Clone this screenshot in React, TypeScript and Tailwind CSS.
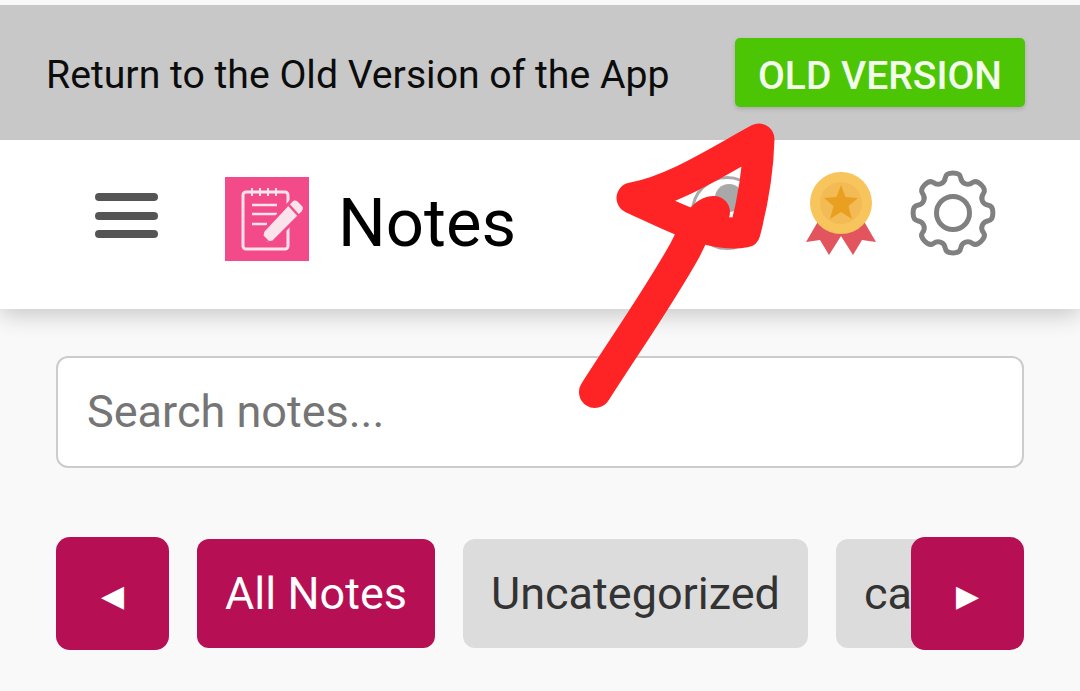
const gearPath = () => {
    const pts: [number, number][] = [];
    for (let i = 0; i < 8; i++) {
        const a = -90 + i * 45;
        const teeth: [number, number][] = [
            [32, a - 15],
            [40.5, a - 10],
            [40.5, a + 10],
            [32, a + 15],
        ];
        teeth.forEach(([r, d]) => {
            const t = (d * Math.PI) / 180;
            pts.push([r * Math.cos(t), r * Math.sin(t)]);
        });
    }
    const mid = (p: [number, number], q: [number, number]) => [(p[0] + q[0]) / 2, (p[1] + q[1]) / 2];
    const start = mid(pts[pts.length - 1], pts[0]);
    let d = `M${start[0].toFixed(2)} ${start[1].toFixed(2)}`;
    pts.forEach((p, i) => {
        const m = mid(p, pts[(i + 1) % pts.length]);
        d += ` Q${p[0].toFixed(2)} ${p[1].toFixed(2)} ${m[0].toFixed(2)} ${m[1].toFixed(2)}`;
    });
    return d + 'Z';
};

function NotesLogo() {
    return (
        <svg width="84" height="84" viewBox="0 0 84 84" className="shrink-0">
            <rect width="84" height="84" fill="#f34b8a" />
            <rect x="18" y="15" width="45" height="57" rx="3" fill="none" stroke="#fbe3ec" strokeWidth="3" />
            <path d="M27 11v8M35 11v8M43 11v8M51 11v8" stroke="#fbe3ec" strokeWidth="2" />
            <path d="M27 28h25M27 37h25M27 47h15" stroke="#fbe3ec" strokeWidth="2.5" />
            <path
                d="M35 67L38 54L66 24Q70 20 74 24L78 28Q81 31 78 35L48 65Z"
                fill="#fbe3ec"
                stroke="#f34b8a"
                strokeWidth="3"
                strokeLinejoin="round"
            />
            <path d="M36 66L38 58L44 64Z" fill="#f34b8a" />
            <path d="M63 27L74 39" stroke="#f34b8a" strokeWidth="2.5" />
        </svg>
    );
}

function Medal() {
    return (
        <svg width="72" height="84" viewBox="0 0 72 84" className="shrink-0">
            <path d="M14 46L0 70L14 68L23 83L35 64L47 83L56 68L70 70L56 46Z" fill="#e2555f" />
            <circle cx="35" cy="31" r="31" fill="#f8c45c" />
            <circle cx="35" cy="31" r="21" fill="#f3bb55" />
            <path d="M35 13L39.5 25L52 26L42.5 34L46 47L35 40L24 47L27.5 34L18 26L30.5 25Z" fill="#e9a020" />
        </svg>
    );
}

function Gear() {
    return (
        <svg width="88" height="88" viewBox="-44 -44 88 88" className="shrink-0 -ml-[1px] -mt-[3px]">
            <path d={gearPath()} fill="none" stroke="#808080" strokeWidth="5" />
            <circle r="16.5" fill="none" stroke="#808080" strokeWidth="5" />
        </svg>
    );
}

function ArrowButton({ glyph, extra }: { glyph: string; extra: string }) {
    return (
        <button
            className={`w-[113px] h-[113px] shrink-0 pt-[3px] rounded-[14px] bg-[#b60f53] text-white flex items-center justify-center text-[30px] font-['DejaVu_Sans',sans-serif] ${extra}`}
        >
            {glyph}
        </button>
    );
}

export default function App() {
    return (
        <div className="relative w-[1080px] h-[691px] overflow-hidden bg-[#f9f9f9] pt-[5px] font-['Roboto',sans-serif]">
            <div className="relative z-10 h-[135px] bg-[#c8c8c8] flex items-center justify-between pl-[46px] pr-[55px]">
                <span className="pt-[5px] text-[39.2px] text-[#0c0c0c] whitespace-nowrap">Return to the Old Version of the App</span>
                <button className="w-[290px] h-[69px] pt-[8px] rounded-[5px] bg-[#4cc604] text-[#f2fbec] text-[39px] font-medium shadow-[0_2px_4px_rgba(0,0,0,0.15)]">
                    OLD VERSION
                </button>
            </div>

            <header className="relative h-[169px] bg-white shadow-[0_6px_22px_rgba(0,0,0,0.2)] flex items-start">
                <div className="ml-[95px] mt-[53px] w-[63px] flex flex-col gap-[10.5px]">
                    <div className="h-[8px] rounded-full bg-[#555]" />
                    <div className="h-[8px] rounded-full bg-[#555]" />
                    <div className="h-[8px] rounded-full bg-[#555]" />
                </div>
                <div className="ml-[67px] mt-[37px]">
                    <NotesLogo />
                </div>
                <span className="ml-[29px] mt-[43px] text-[67px] leading-[80px] text-black">Notes</span>
                <div className="ml-auto mr-[83px] mt-[32px] flex items-start gap-[32px]">
                    <div className="relative w-[72px] h-[74px] mr-[11px] mt-[4px] rounded-full border-[3px] border-[#aaa]">
                        <div className="absolute left-[21px] top-[5px] w-[28px] h-[28px] rounded-full bg-[#a8a8a8]" />
                    </div>
                    <Medal />
                    <Gear />
                </div>
            </header>

            <main className="px-[56px] pt-[47px]">
                <div className="h-[112px] rounded-[12px] border-2 border-[#cccccc] bg-white flex items-center pl-[29px] text-[45px] text-[#757575]">
                    Search notes...
                </div>

                <div className="relative mt-[69px] flex items-center gap-[28px]">
                    <ArrowButton glyph="◀" extra="" />
                    <div className="flex items-center gap-[28px]">
                        <div className="h-[109px] px-[28px] rounded-[12px] bg-[#b60f53] text-white text-[45px] flex items-center whitespace-nowrap">
                            All Notes
                        </div>
                        <div className="h-[109px] px-[28px] rounded-[12px] bg-[#dcdcdc] text-[#333] text-[45px] flex items-center whitespace-nowrap">
                            Uncategorized
                        </div>
                        <div className="h-[109px] w-[120px] pl-[28px] rounded-[12px] bg-[#dcdcdc] text-[#333] text-[45px] flex items-center whitespace-nowrap">
                            ca
                        </div>
                    </div>
                    <ArrowButton glyph="▶" extra="absolute right-0 top-0" />
                </div>
            </main>

            {/* hand drawn red arrow on top of the screenshot */}
            <svg className="absolute left-0 top-0 z-20 pointer-events-none" width="1080" height="691" viewBox="0 0 1080 691">
                <path
                    d="M595 392C625 345 660 295 685 250C695 230 702 212 714 212"
                    fill="none"
                    stroke="#fe2324"
                    strokeWidth="32"
                    strokeLinecap="round"
                    strokeLinejoin="round"
                />
                <path
                    d="M632 198C675 190 720 160 759 139C758 175 752 205 745 232C710 238 670 215 632 198Z"
                    fill="none"
                    stroke="#fe2324"
                    strokeWidth="31"
                    strokeLinejoin="round"
                />
            </svg>
        </div>
    );
}
